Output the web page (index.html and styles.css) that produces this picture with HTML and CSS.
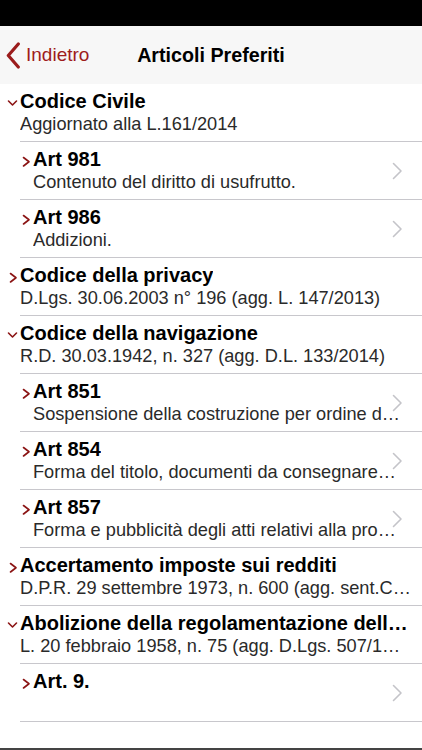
FILE: index.html
```html
<!DOCTYPE html>
<html lang="it">
<head>
<meta charset="utf-8">
<title>Articoli Preferiti</title>
<link rel="stylesheet" href="styles.css">
</head>
<body>
<div class="status"></div>
<header class="nav">
  <div class="back">
    <svg class="back-chev" width="14" height="27" viewBox="0 0 14 27"><path d="M12.3 2 L2.3 13.5 L12.3 25" fill="none" stroke="#9b1c1c" stroke-width="3.2" stroke-linecap="round" stroke-linejoin="round"/></svg>
    <span>Indietro</span>
  </div>
  <div class="nav-title">Articoli Preferiti</div>
  <div></div>
</header>
<main class="list">
  <div class="row">
    <div class="content">
      <div class="title"><svg class="chev" viewBox="0 0 13 23"><path d="M1.5 11 L5.5 15 L9.5 11"/></svg><span>Codice Civile</span></div>
      <div class="subtitle">Aggiornato alla L.161/2014</div>
    </div>
  </div>
  <div class="row sub">
    <div class="content">
      <div class="title"><svg class="chev" viewBox="0 0 13 23"><path d="M3.5 9.5 L9 13.75 L3.5 18"/></svg><span>Art 981</span></div>
      <div class="subtitle">Contenuto del diritto di usufrutto.</div>
    </div>
    <svg class="disc" viewBox="0 0 11 18"><path d="M1.5 1.5 L9 9 L1.5 16.5"/></svg>
  </div>
  <div class="row sub">
    <div class="content">
      <div class="title"><svg class="chev" viewBox="0 0 13 23"><path d="M3.5 9.5 L9 13.75 L3.5 18"/></svg><span>Art 986</span></div>
      <div class="subtitle">Addizioni.</div>
    </div>
    <svg class="disc" viewBox="0 0 11 18"><path d="M1.5 1.5 L9 9 L1.5 16.5"/></svg>
  </div>
  <div class="row">
    <div class="content">
      <div class="title"><svg class="chev" viewBox="0 0 13 23"><path d="M3.5 9.5 L9 13.75 L3.5 18"/></svg><span>Codice della privacy</span></div>
      <div class="subtitle">D.Lgs. 30.06.2003 n° 196 (agg. L. 147/2013)</div>
    </div>
  </div>
  <div class="row">
    <div class="content">
      <div class="title"><svg class="chev" viewBox="0 0 13 23"><path d="M1.5 11 L5.5 15 L9.5 11"/></svg><span>Codice della navigazione</span></div>
      <div class="subtitle">R.D. 30.03.1942, n. 327 (agg. D.L. 133/2014)</div>
    </div>
  </div>
  <div class="row sub">
    <div class="content">
      <div class="title"><svg class="chev" viewBox="0 0 13 23"><path d="M3.5 9.5 L9 13.75 L3.5 18"/></svg><span>Art 851</span></div>
      <div class="subtitle">Sospensione della costruzione per ordine d…</div>
    </div>
    <svg class="disc" viewBox="0 0 11 18"><path d="M1.5 1.5 L9 9 L1.5 16.5"/></svg>
  </div>
  <div class="row sub">
    <div class="content">
      <div class="title"><svg class="chev" viewBox="0 0 13 23"><path d="M3.5 9.5 L9 13.75 L3.5 18"/></svg><span>Art 854</span></div>
      <div class="subtitle">Forma del titolo, documenti da consegnare…</div>
    </div>
    <svg class="disc" viewBox="0 0 11 18"><path d="M1.5 1.5 L9 9 L1.5 16.5"/></svg>
  </div>
  <div class="row sub">
    <div class="content">
      <div class="title"><svg class="chev" viewBox="0 0 13 23"><path d="M3.5 9.5 L9 13.75 L3.5 18"/></svg><span>Art 857</span></div>
      <div class="subtitle">Forma e pubblicità degli atti relativi alla pro…</div>
    </div>
    <svg class="disc" viewBox="0 0 11 18"><path d="M1.5 1.5 L9 9 L1.5 16.5"/></svg>
  </div>
  <div class="row">
    <div class="content">
      <div class="title"><svg class="chev" viewBox="0 0 13 23"><path d="M3.5 9.5 L9 13.75 L3.5 18"/></svg><span>Accertamento imposte sui redditi</span></div>
      <div class="subtitle">D.P.R. 29 settembre 1973, n. 600 (agg. sent.C…</div>
    </div>
  </div>
  <div class="row">
    <div class="content">
      <div class="title"><svg class="chev" viewBox="0 0 13 23"><path d="M1.5 11 L5.5 15 L9.5 11"/></svg><span>Abolizione della regolamentazione dell…</span></div>
      <div class="subtitle">L. 20 febbraio 1958, n. 75 (agg. D.Lgs. 507/1…</div>
    </div>
  </div>
  <div class="row sub">
    <div class="content">
      <div class="title"><svg class="chev" viewBox="0 0 13 23"><path d="M3.5 9.5 L9 13.75 L3.5 18"/></svg><span>Art. 9.</span></div>
    </div>
    <svg class="disc" viewBox="0 0 11 18"><path d="M1.5 1.5 L9 9 L1.5 16.5"/></svg>
  </div>
</main>
<div class="footer"></div>
</body>
</html>
```
FILE: styles.css
```css
html, body {
  margin: 0;
  padding: 0;
}
body {
  width: 422px;
  height: 750px;
  overflow: hidden;
  display: flex;
  flex-direction: column;
  background: #ffffff;
  font-family: "Liberation Sans", Arial, sans-serif;
  color: #000;
}
.status {
  height: 26px;
  flex: none;
  background: #000;
}
.nav {
  height: 58px;
  flex: none;
  background: #f7f7f7;
  display: grid;
  grid-template-columns: 1fr auto 1fr;
  align-items: center;
}
.back {
  display: flex;
  align-items: center;
  padding-left: 6px;
  color: #9e1c1c;
  font-size: 19px;
}
.back-chev {
  display: block;
  margin-right: 6px;
}
.nav-title {
  font-size: 19.7px;
  font-weight: bold;
  color: #000;
}
.list {
  flex: 1;
  min-height: 0;
}
.row {
  margin-left: 20px;
  height: 58px;
  box-sizing: border-box;
  border-bottom: 1px solid #c8c7cc;
  display: grid;
  padding-right: 3px;
}
.row.sub {
  padding-left: 13px;
}
.content {
  grid-area: 1 / 1;
  min-width: 0;
  padding-top: 6px;
}
.title {
  display: flex;
  align-items: center;
  margin-left: -13px;
  font-size: 20px;
  line-height: 23px;
  font-weight: bold;
  white-space: nowrap;
}
.title span {
  overflow: hidden;
  min-width: 0;
}
.chev {
  flex: none;
  width: 13px;
  height: 23px;
  fill: none;
  stroke: #8b1414;
  stroke-width: 1.6;
  stroke-linecap: round;
  stroke-linejoin: round;
}
.subtitle {
  font-size: 18.2px;
  line-height: 23px;
  color: #2a2a2a;
  white-space: nowrap;
  overflow: hidden;
}
.disc {
  grid-area: 1 / 1;
  justify-self: end;
  align-self: center;
  width: 11px;
  height: 18px;
  margin-right: 16px;
  fill: none;
  stroke: #c4c4c9;
  stroke-width: 1.6;
  stroke-linecap: round;
  stroke-linejoin: round;
}
.footer {
  height: 2px;
  flex: none;
  background: #444;
}
```
